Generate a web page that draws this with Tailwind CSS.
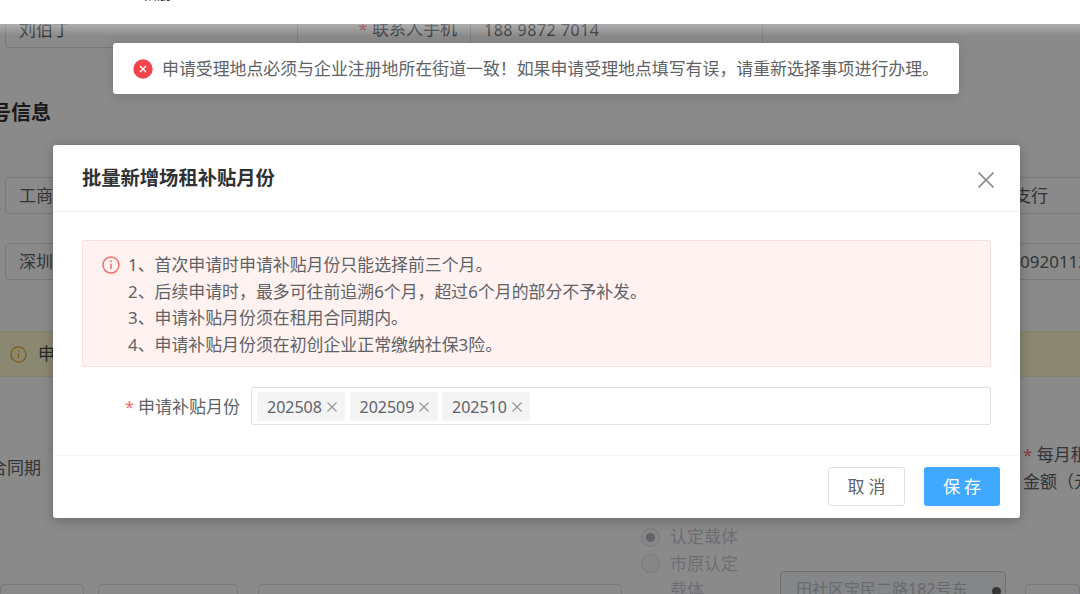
<!DOCTYPE html>
<html lang="zh-CN">
  <head>
    <meta charset="UTF-8" />
    <meta name="viewport" content="width=device-width, initial-scale=1.0" />
    <title>批量新增场租补贴月份</title>
    <script src="https://cdn.jsdelivr.net/npm/@tailwindcss/browser@4"></script>
  </head>
  <body class="bg-white font-['Noto_Sans','Noto_Sans_CJK_SC',sans-serif] text-[17px] text-[#606266]">
    <div class="relative w-[1080px] h-[594px] overflow-hidden">

      <!-- page behind the dialog -->
      <div class="h-[594px] overflow-hidden">
        <div class="h-3"></div>

        <div class="flex h-[36px] text-[#606266]">
          <div class="ml-[5px] w-[293px] border border-[#dcdfe6] rounded pl-[13px] pt-[3px] leading-[28px]">刘伯丁</div>
          <div class="w-[159px] text-right pt-[3px] leading-[28px]"><span class="text-[#f56c6c]">*</span> 联系人手机</div>
          <div class="ml-[13px] w-[293px] border border-[#dcdfe6] pl-[13px] pt-[3px] leading-[28px] tracking-[0.5px] text-[16px]">188 9872 7014</div>
        </div>

        <div class="mt-[51px] -ml-[9px] h-[28px] leading-[28px] text-[20px] font-bold text-[#303133]">号信息</div>

        <div class="mt-[50px] flex h-[37px]">
          <div class="ml-[5px] w-[400px] border border-[#dcdfe6] rounded pl-[13px] leading-[35px]">工商银行</div>
          <div class="ml-[100px] flex-1 border border-[#dcdfe6] pl-[508px] whitespace-nowrap overflow-hidden leading-[35px] -mr-px">支行</div>
        </div>

        <div class="mt-[29px] flex h-[37px]">
          <div class="ml-[5px] w-[400px] border border-[#dcdfe6] rounded pl-[13px] leading-[35px]">深圳市</div>
          <div class="ml-[100px] flex-1 border border-[#dcdfe6] pl-[514px] whitespace-nowrap overflow-hidden leading-[35px] -mr-px">09201126</div>
        </div>

        <div class="mt-[51px] h-[46px] flex items-center bg-[#fffbd0] border-y border-[#f5eec0] pl-[10px] text-[#f0a820]">
          <svg class="w-[17px] h-[17px] shrink-0" viewBox="0 0 17 17" fill="none" stroke="currentColor" stroke-width="1.4">
            <circle cx="8.5" cy="8.5" r="7.6" />
            <path d="M8.5 7.3v5M8.5 4.3v1.5" />
          </svg>
          <span class="ml-[11px] text-[#4a4a4a]">申请补贴</span>
        </div>

        <div class="mt-[64px] h-[54px] flex items-center text-[#606266]">
          <div class="-ml-[10px] w-[52px] whitespace-nowrap">合同期</div>
          <div class="ml-auto w-[57px] overflow-hidden whitespace-nowrap leading-[27px]">
            <div><span class="text-[#f56c6c]">*</span> 每月租</div>
            <div>金额（元）</div>
          </div>
        </div>

        <div class="mt-[30px] flex items-start">
          <div class="mt-[59px] w-[84px] h-[40px] border border-[#dcdfe6] rounded"></div>
          <div class="mt-[59px] ml-[14px] w-[140px] h-[40px] border border-[#dcdfe6] rounded"></div>
          <div class="mt-[59px] ml-[20px] w-[364px] h-[40px] border border-[#dcdfe6] rounded"></div>
          <div class="ml-[19px] w-[100px] text-[#c8ccd4] leading-[26.5px] -mt-px">
            <div class="flex items-center gap-[10px] h-[26.5px]">
              <span class="w-[19px] h-[19px] rounded-full border border-[#dcdfe6] bg-[#f5f7fa] flex items-center justify-center"><span class="w-[9px] h-[9px] rounded-full bg-[#b4b8bf]"></span></span>
              <span>认定载体</span>
            </div>
            <div class="flex items-center gap-[10px] h-[26.5px]">
              <span class="w-[19px] h-[19px] rounded-full border border-[#dcdfe6] bg-[#f5f7fa]"></span>
              <span>市原认定</span>
            </div>
            <div class="pl-[29px]">载体</div>
          </div>
          <div class="mt-[46px] ml-[39px] w-[226px] h-[60px] border border-[#c8ccd4] rounded bg-[#f5f7fa] pl-[15px] pr-[4px] pt-[5px] text-[16px] text-[#c0c4cc] whitespace-nowrap overflow-hidden leading-[24px] flex">
            <span class="w-[190px] overflow-hidden">田社区宝民二路182号东</span>
            <span class="ml-auto mt-[10px] w-[9px] h-[9px] rounded-full bg-[#606266] shrink-0"></span>
          </div>
          <div class="mt-[59px] ml-[19px] flex-1 h-[40px] border border-[#dcdfe6] rounded"></div>
        </div>
      </div>

      <!-- top bar stays white above the mask -->
      <div class="absolute inset-x-0 top-0 h-[24px] bg-white overflow-hidden">
        <div class="-mt-[17px] ml-[142px] text-[15px] leading-[20px] text-[#303133]">相册</div>
      </div>

      <!-- mask -->
      <div class="absolute inset-x-0 top-[24px] bottom-0 bg-black/46"></div>
      <div class="absolute inset-x-0 top-[24px] h-[12px] bg-gradient-to-b from-white/30 to-white/0"></div>

      <!-- error message -->
      <div class="absolute left-[113px] top-[43px] w-[846px] h-[51px] bg-white rounded-[3px] shadow-[0_2px_12px_rgba(0,0,0,0.15)] flex items-center pl-[20px] text-[16.9px] text-[#606266] whitespace-nowrap">
        <svg class="w-[20px] h-[20px] shrink-0" viewBox="0 0 20 20">
          <circle cx="10" cy="10" r="9.7" fill="#f4444e" />
          <path d="M7 7l6 6M13 7l-6 6" stroke="#fff" stroke-width="1.4" fill="none" />
        </svg>
        <span class="ml-[9px]">申请受理地点必须与企业注册地所在街道一致！如果申请受理地点填写有误，请重新选择事项进行办理。</span>
      </div>

      <!-- dialog -->
      <div class="absolute left-[53px] top-[145px] w-[967px] h-[373px] bg-white rounded-[3px] shadow-[0_2px_12px_rgba(0,0,0,0.25)] flex flex-col">
        <div class="h-[67px] shrink-0 border-b border-[#f0f0f0] flex items-center justify-between pl-[29px] pr-[26px]">
          <h3 class="text-[19.3px] font-bold text-[#303133] mt-[1px]">批量新增场租补贴月份</h3>
          <svg class="w-[16px] h-[16px] mt-[3px]" viewBox="0 0 16 16" fill="none" stroke="#8c8c8c" stroke-width="1.6">
            <path d="M0.5 0.5l15 15M15.5 0.5l-15 15" />
          </svg>
        </div>

        <div class="h-[244px] shrink-0 px-[29px] pt-[28px] border-b border-[#f5f5f5]">
          <div class="h-[127px] w-[909px] bg-[#fff2f0] border border-[#fbdede] rounded-[2px] flex pl-[19px] pt-[11px]">
            <svg class="w-[18px] h-[18px] shrink-0 mt-[4px]" viewBox="0 0 18 18" fill="none" stroke="#f56c6c" stroke-width="1.5">
              <circle cx="9" cy="9" r="8" />
              <path d="M9 7.7v5.3M9 4.5v1.7" />
            </svg>
            <div class="ml-[8px] leading-[26.6px] text-[16.9px] text-[#606266]">
              <p>1、首次申请时申请补贴月份只能选择前三个月。</p>
              <p>2、后续申请时，最多可往前追溯6个月，超过6个月的部分不予补发。</p>
              <p>3、申请补贴月份须在租用合同期内。</p>
              <p>4、申请补贴月份须在初创企业正常缴纳社保3险。</p>
            </div>
          </div>

          <div class="mt-[20px] flex items-center">
            <label class="w-[158px] shrink-0 text-right text-[17px] text-[#606266] whitespace-nowrap pt-[1px]"><span class="text-[#f56c6c] mr-[4px]">*</span>申请补贴月份</label>
            <div class="ml-[11px] w-[740px] h-[38px] border border-[#dcdfe6] rounded-[2px] flex items-center gap-[4.5px] pl-[5px] text-[16px]">
              <span class="h-[29px] w-[88px] bg-[#f4f4f5] rounded-[2px] flex items-center pl-[10px] pt-[1px] gap-[5px]">202508
                <svg class="w-[10px] h-[10px]" viewBox="0 0 10 10" fill="none" stroke="#909399" stroke-width="1.1"><path d="M0.5 0.5l9 9M9.5 0.5l-9 9" /></svg>
              </span>
              <span class="h-[29px] w-[88px] bg-[#f4f4f5] rounded-[2px] flex items-center pl-[10px] pt-[1px] gap-[5px]">202509
                <svg class="w-[10px] h-[10px]" viewBox="0 0 10 10" fill="none" stroke="#909399" stroke-width="1.1"><path d="M0.5 0.5l9 9M9.5 0.5l-9 9" /></svg>
              </span>
              <span class="h-[29px] w-[88px] bg-[#f4f4f5] rounded-[2px] flex items-center pl-[10px] pt-[1px] gap-[5px]">202510
                <svg class="w-[10px] h-[10px]" viewBox="0 0 10 10" fill="none" stroke="#909399" stroke-width="1.1"><path d="M0.5 0.5l9 9M9.5 0.5l-9 9" /></svg>
              </span>
            </div>
          </div>
        </div>

        <div class="flex-1 flex justify-end items-start gap-[19px] pt-[11px] pr-[20px]">
          <button class="w-[77px] h-[39px] border border-[#dcdfe6] rounded-[3px] bg-white text-[#606266] text-[17px] tracking-[4px] pl-[4px]">取消</button>
          <button class="w-[76px] h-[39px] rounded-[3px] bg-[#40a9ff] text-white text-[17px] tracking-[4px] pl-[4px]">保存</button>
        </div>
      </div>
    </div>
  </body>
</html>
